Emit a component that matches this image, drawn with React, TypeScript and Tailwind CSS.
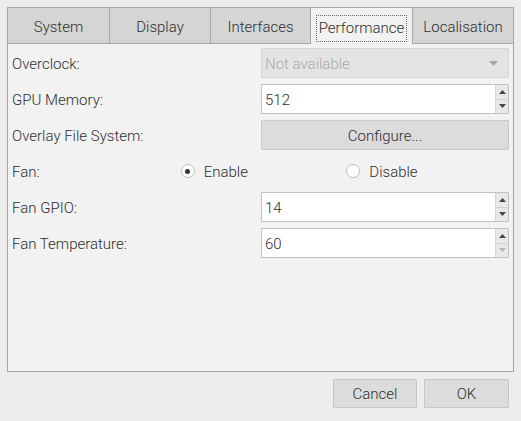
import React from "react";

const tabs = [
  { name: "System", w: "w-[102px]" },
  { name: "Display", w: "w-[101px]" },
  { name: "Interfaces", w: "w-[100px]" },
  { name: "Performance", w: "w-[102px]" },
  { name: "Localisation", w: "w-[102px]" },
];

function Spin({ value, downDisabled = false }: { value: string; downDisabled?: boolean }) {
  return (
    <div className="flex h-[30px] w-[248px] border border-[#c2c2c2] bg-white rounded-[1px]">
      <div className="flex-1 flex items-center pl-[3px] pt-[2px]">{value}</div>
      <div className="w-[13px] flex flex-col bg-[#e8e8e8] border-l border-[#d6d6d6]">
        <div className="flex-1 flex items-center justify-center border-b border-[#d2d2d2]">
          <svg width="7" height="4" viewBox="0 0 7 4"><path d="M0 4 L3.5 0 L7 4 Z" fill="#444" /></svg>
        </div>
        <div className="flex-1 flex items-center justify-center">
          <svg width="7" height="4" viewBox="0 0 7 4"><path d="M0 0 L7 0 L3.5 4 Z" fill={downDisabled ? "#b4b4b4" : "#444"} /></svg>
        </div>
      </div>
    </div>
  );
}

function Row({ label, children }: { label: string; children: React.ReactNode }) {
  return (
    <div className="flex h-[30px] items-center">
      <span className="w-[249px] pt-[2px]">{label}</span>
      {children}
    </div>
  );
}

function Radio({ label, checked }: { label: string; checked?: boolean }) {
  return (
    <div className="flex items-center pl-[3px] gap-[9px]">
      <div className="w-[14px] h-[14px] rounded-full border border-[#bdbdbd] bg-white flex items-center justify-center">
        {checked && <div className="w-[5px] h-[5px] rounded-full bg-[#333]" />}
      </div>
      <span className="pt-[2px]">{label}</span>
    </div>
  );
}

export default function App() {
  return (
    <div className="w-[521px] h-[421px] bg-[#ededed] flex flex-col pt-[7px] px-[7px] font-['Roboto','Liberation_Sans',sans-serif] font-light text-[15px] text-[#2e2e2e]">
      {/* Tabs */}
      <div className="flex h-[37px]">
        {tabs.map((t, i) => {
          const active = t.name === "Performance";
          return (
            <div
              key={t.name}
              className={`${t.w} flex items-center justify-center border-t border-l border-[#a6a6a6] pt-[4px] ${
                active ? "bg-[#f2f2f2]" : "bg-[#d5d5d5] border-b"
              } ${i === tabs.length - 1 ? "border-r" : ""}`}
            >
              {active ? (
                <span className="border border-dotted border-[#666] px-[2px] h-[27px] flex items-center pt-[1px]">{t.name}</span>
              ) : (
                t.name
              )}
            </div>
          );
        })}
      </div>

      {/* Panel */}
      <div className="h-[328px] bg-[#f2f2f2] border-l border-r border-b border-[#a6a6a6] pt-[4px] pl-[4px] pr-[4px] flex flex-col gap-[6px]">
        <Row label="Overclock:">
          <div className="w-[248px] h-[30px] flex items-center justify-between bg-[#e4e4e4] border border-[#d4d4d4] rounded-[1px] pl-[3px] pr-[10px] text-[#a8a8a8]">
            <span className="pt-[2px]">Not available</span>
            <svg width="9" height="5" viewBox="0 0 9 5"><path d="M0 0 L9 0 L4.5 5 Z" fill="#a8a8a8" /></svg>
          </div>
        </Row>
        <Row label="GPU Memory:">
          <Spin value="512" />
        </Row>
        <Row label="Overlay File System:">
          <div className="w-[248px] h-[30px] flex items-center justify-center bg-[#dcdcdc] border border-[#c8c8c8] rounded-[1px] pt-[2px]">
            Configure...
          </div>
        </Row>
        <div className="grid grid-cols-3 h-[30px] items-center">
          <span className="pt-[2px]">Fan:</span>
          <Radio label="Enable" checked />
          <Radio label="Disable" />
        </div>
        <Row label="Fan GPIO:">
          <Spin value="14" />
        </Row>
        <Row label="Fan Temperature:">
          <Spin value="60" downDisabled />
        </Row>
      </div>

      {/* Buttons */}
      <div className="flex justify-end gap-[7px] pt-[7px] pr-[5px]">
        <div className="w-[84px] h-[29px] flex items-center justify-center bg-[#dcdcdc] border border-[#c6c6c6] rounded-[1px] pt-[2px]">
          Cancel
        </div>
        <div className="w-[85px] h-[29px] flex items-center justify-center bg-[#dcdcdc] border border-[#c6c6c6] rounded-[1px] pt-[2px]">
          OK
        </div>
      </div>
    </div>
  );
}
